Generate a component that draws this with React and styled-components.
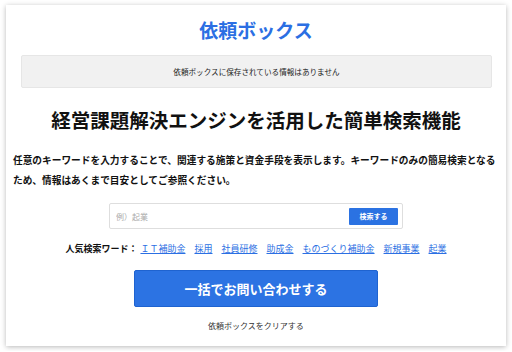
import React from "react"
import styled, { createGlobalStyle } from "styled-components"

const GlobalStyle = createGlobalStyle`
  body {
    margin: 0;
    padding: 5px 6px;
    background: #fff;
    font-family: "Noto Sans CJK JP", "Noto Sans", sans-serif;
  }
`

const Card = styled.div`
  width: 500px;
  height: 341px;
  box-sizing: border-box;
  background: #fff;
  box-shadow: 0 1px 5px rgba(0, 0, 0, 0.28);
  display: flex;
  flex-direction: column;
  align-items: center;
  padding-top: 13px;
`

const Title = styled.h1`
  margin: 0;
  font-size: 19px;
  line-height: 24px;
  font-weight: 700;
  color: #2b6fe3;
`

const Notice = styled.div`
  align-self: stretch;
  margin: 13px 14px 0 15px;
  height: 33px;
  box-sizing: border-box;
  background: #f1f1f1;
  border: 1px solid #e6e6e6;
  border-radius: 2px;
  display: flex;
  align-items: center;
  justify-content: center;
  font-size: 7.6px;
  color: #222;
`

const Heading = styled.h2`
  margin: 19px 0 0;
  font-size: 19.5px;
  line-height: 26px;
  font-weight: 700;
  color: #111;
`

const Lead = styled.p`
  align-self: stretch;
  margin: 17px 0 0;
  padding: 0 4px 0 7px;
  font-size: 9.7px;
  line-height: 20px;
  font-weight: 700;
  color: #111;
`

const SearchBox = styled.form`
  margin-top: 13px;
  width: 294px;
  height: 26px;
  box-sizing: border-box;
  border: 1px solid #dedede;
  border-radius: 2px;
  display: flex;
  align-items: center;
  padding: 0 4px 0 6px;
`

const SearchInput = styled.input`
  flex: 1;
  border: none;
  outline: none;
  font-family: inherit;
  font-size: 8px;
  color: #333;
  padding: 0;
  &::placeholder {
    color: #aaa;
  }
`

const SearchButton = styled.button`
  width: 49px;
  height: 17px;
  border: none;
  border-radius: 1px;
  background: #2b72e2;
  color: #fff;
  font-family: inherit;
  font-size: 7px;
  font-weight: 700;
  padding: 0;
`

const Popular = styled.div`
  margin-top: 13px;
  display: flex;
  align-items: center;
  gap: 9px;
  font-size: 9px;
  line-height: 14px;
`

const PopularLabel = styled.span`
  font-weight: 700;
  color: #111;
  margin-right: -6px;
`

const Keyword = styled.a`
  color: #2b6fe3;
  text-decoration: underline;
`

const Submit = styled.button`
  margin-top: 14px;
  width: 244px;
  height: 37px;
  border: 1px solid #1f63d0;
  border-radius: 2px;
  background: #2c73e3;
  color: #fff;
  font-family: inherit;
  font-size: 13px;
  font-weight: 700;
`

const Clear = styled.a`
  margin-top: 13px;
  font-size: 8px;
  line-height: 12px;
  color: #333;
`

const keywords = ["ＩＴ補助金", "採用", "社員研修", "助成金", "ものづくり補助金", "新規事業", "起業"]

export default function App() {
  return (
    <>
      <GlobalStyle />
      <Card>
        <Title>依頼ボックス</Title>
        <Notice>依頼ボックスに保存されている情報はありません</Notice>
        <Heading>経営課題解決エンジンを活用した簡単検索機能</Heading>
        <Lead>
          任意のキーワードを入力することで、関連する施策と資金手段を表示します。キーワードのみの簡易検索となるため、情報はあくまで目安としてご参照ください。
        </Lead>
        <SearchBox onSubmit={(e) => e.preventDefault()}>
          <SearchInput placeholder="例）起業" />
          <SearchButton type="submit">検索する</SearchButton>
        </SearchBox>
        <Popular>
          <PopularLabel>人気検索ワード：</PopularLabel>
          {keywords.map((k) => (
            <Keyword key={k} href="#">
              {k}
            </Keyword>
          ))}
        </Popular>
        <Submit type="button">一括でお問い合わせする</Submit>
        <Clear>依頼ボックスをクリアする</Clear>
      </Card>
    </>
  )
}
